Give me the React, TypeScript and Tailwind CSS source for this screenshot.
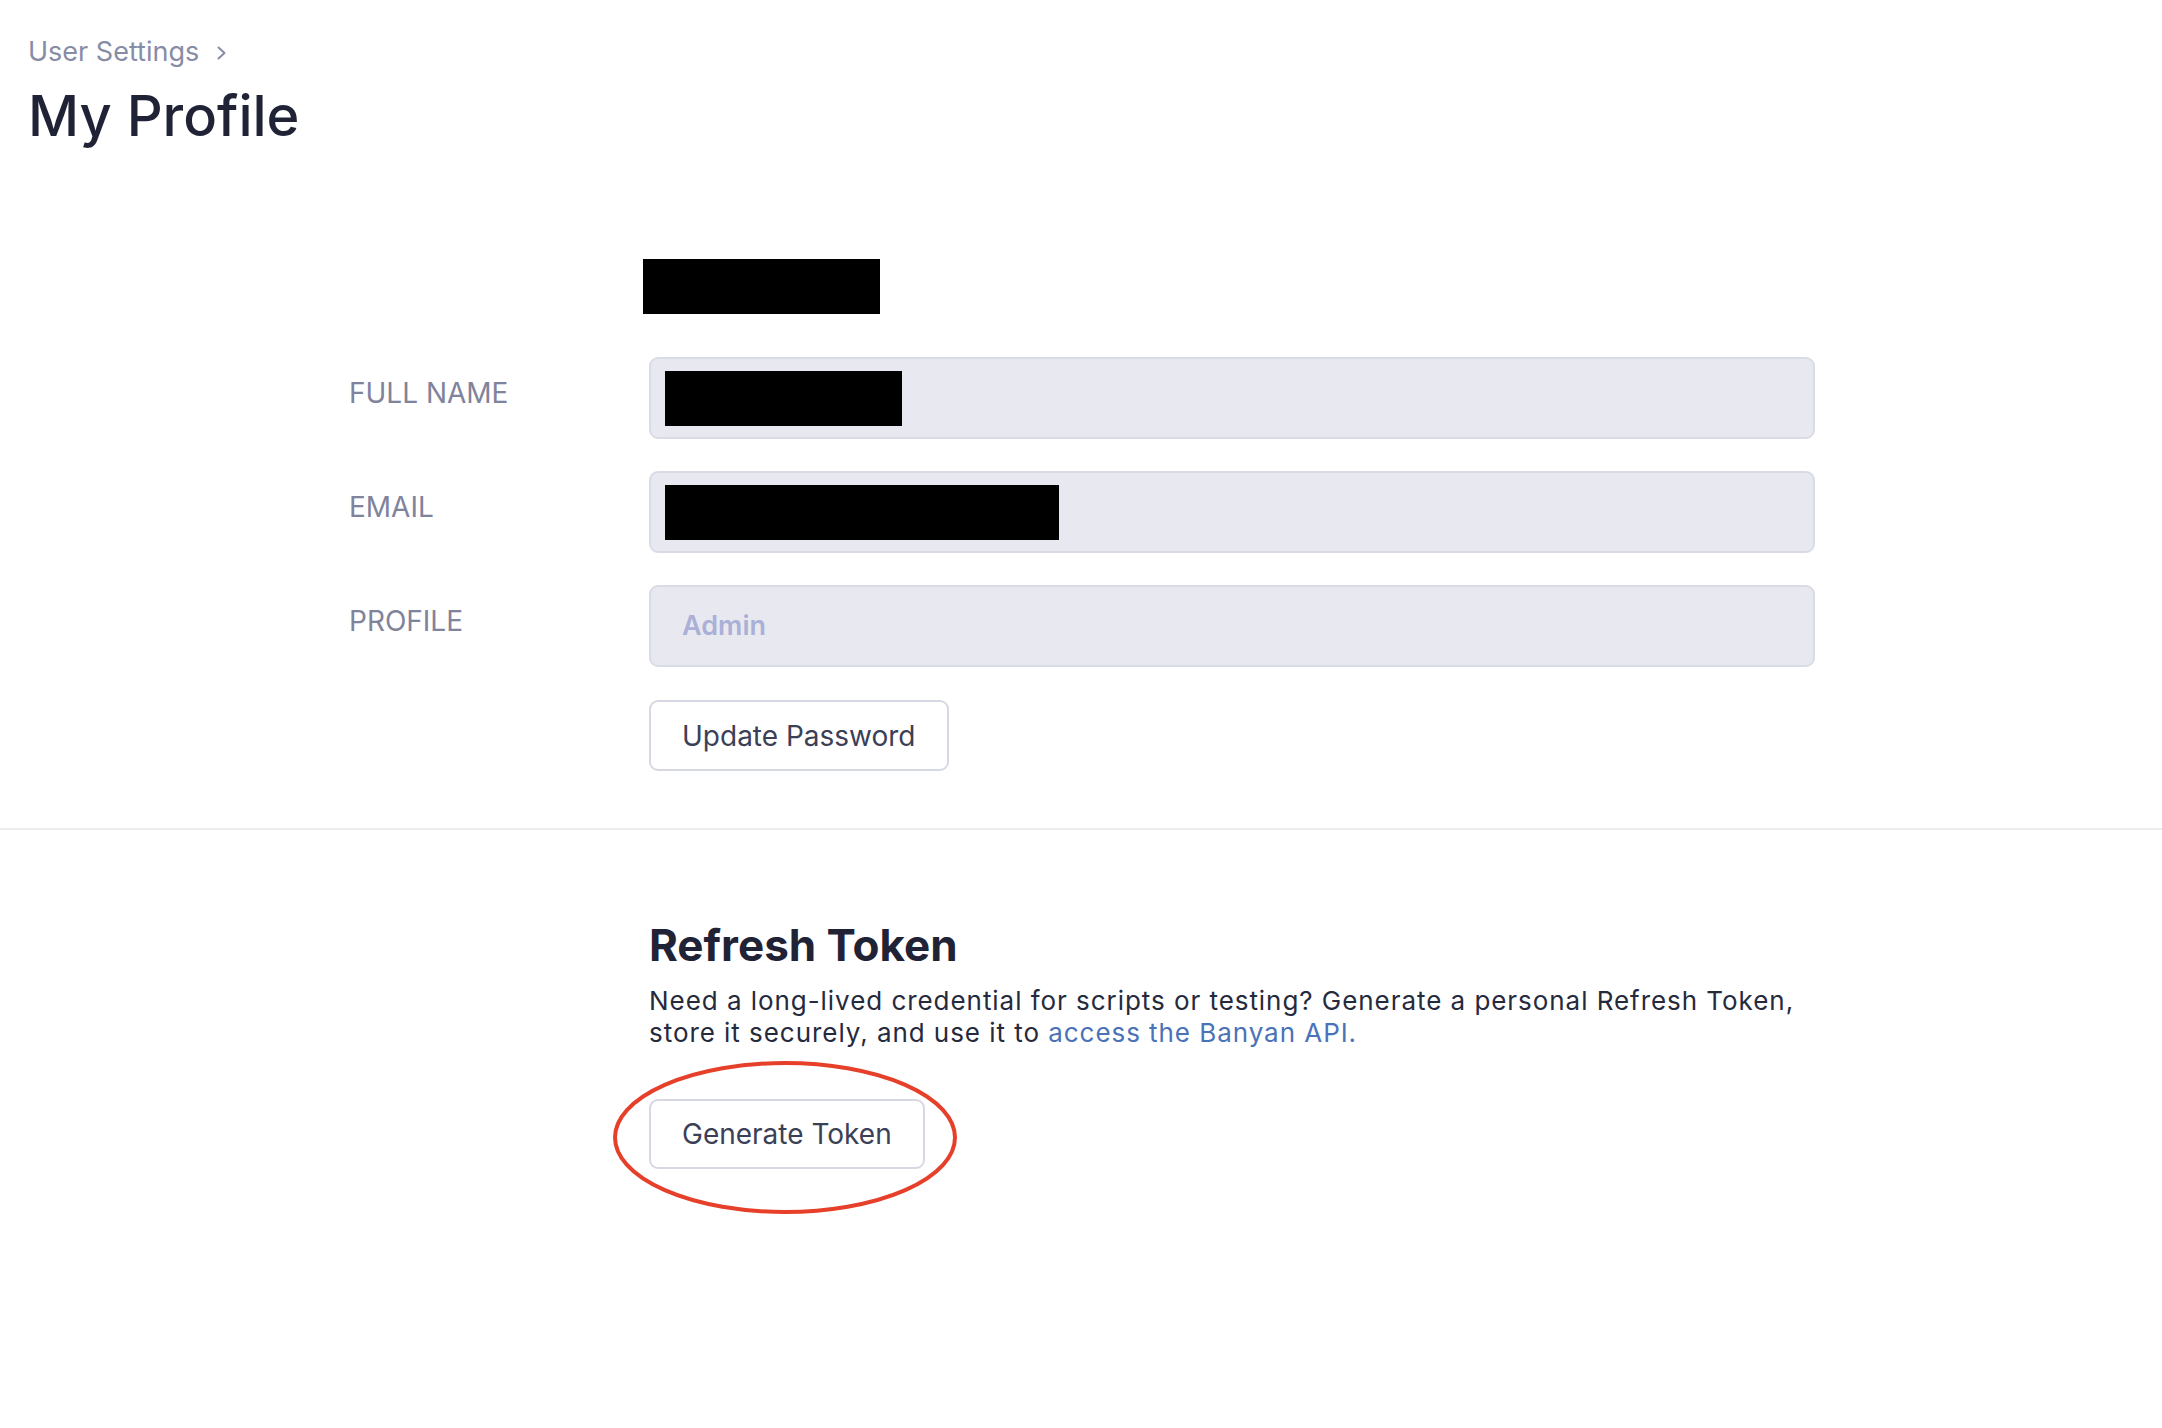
export default function App() {
  const rows = [
    { label: "FULL NAME", kind: "box", w: 237 },
    { label: "EMAIL", kind: "box", w: 394 },
    { label: "PROFILE", kind: "text", value: "Admin" },
  ];
  return (
    <div className="min-h-[1428px] bg-white font-['Inter',sans-serif] text-[#21253a]">
      <header className="pl-[28px] pt-[34px]">
        <div className="flex items-center gap-[17px] text-[27px] leading-[36px] text-[#878ca6]">
          <span>User Settings</span>
          <svg width="12" height="14" viewBox="0 0 12 14" fill="none" className="mt-[1px]">
            <polyline points="2.5,1.5 8.5,7 2.5,12.5" stroke="#878ca6" strokeWidth="2" strokeLinecap="round" strokeLinejoin="round" />
          </svg>
        </div>
        <h1 className="mt-[11px] text-[56px] leading-[70px] font-medium text-[#1f2335]">My Profile</h1>
      </header>

      <section className="mx-auto w-[1468px] pt-[108px] pb-[57px]">
        <div className="pl-[296px]">
          <div className="h-[55px] w-[237px] bg-black" />
        </div>
        <div className="mt-[43px] flex flex-col gap-[32px]">
          {rows.map((r) => (
            <div key={r.label} className="flex">
              <div className="w-[302px] shrink-0 pt-[16px] pl-[2px] text-[28px] leading-[40px] text-[#7f839c]">{r.label}</div>
              <div className="flex h-[82px] w-[1168px] items-center rounded-[9px] border-2 border-[#d9dbe6] bg-[#e8e9f0] pl-[14px]">
                {r.kind === "box" ? (
                  <div className="h-[55px] bg-black" style={{ width: r.w }} />
                ) : (
                  <span className="pl-[17px] text-[27px] font-semibold text-[#aab0d6]">{r.value}</span>
                )}
              </div>
            </div>
          ))}
        </div>
        <div className="mt-[33px] pl-[302px]">
          <button className="h-[71px] rounded-[9px] border-2 border-[#d6d8e3] bg-white px-[31px] text-[28px] text-[#3c4056]">
            Update Password
          </button>
        </div>
      </section>

      <div className="h-[2px] w-full bg-[#ededf0]" />

      <section className="mx-auto w-[1468px] pt-[88px] pl-[302px]">
        <h2 className="text-[44px] leading-[54px] font-bold text-[#1f2335]">Refresh Token</h2>
        <p className="mt-[13px] w-[1168px] text-[26px] leading-[32px] tracking-[0.95px] text-[#262a3d]">
          Need a long-lived credential for scripts or testing? Generate a personal Refresh Token, store it securely, and use it to{" "}
          <a className="text-[#4a72b8]">access the Banyan API.</a>
        </p>
        <div className="mt-[50px]">
          <div className="relative inline-block">
            <button className="h-[70px] rounded-[9px] border-2 border-[#d6d8e3] bg-white px-[31px] text-[28px] text-[#3c4056]">
              Generate Token
            </button>
            <svg className="pointer-events-none absolute left-[-36px] top-[-38px]" width="344" height="153" viewBox="0 0 344 153" fill="none">
              <ellipse cx="172" cy="76.5" rx="170" ry="74.5" stroke="#e6402a" strokeWidth="4" />
            </svg>
          </div>
        </div>
      </section>
    </div>
  );
}
